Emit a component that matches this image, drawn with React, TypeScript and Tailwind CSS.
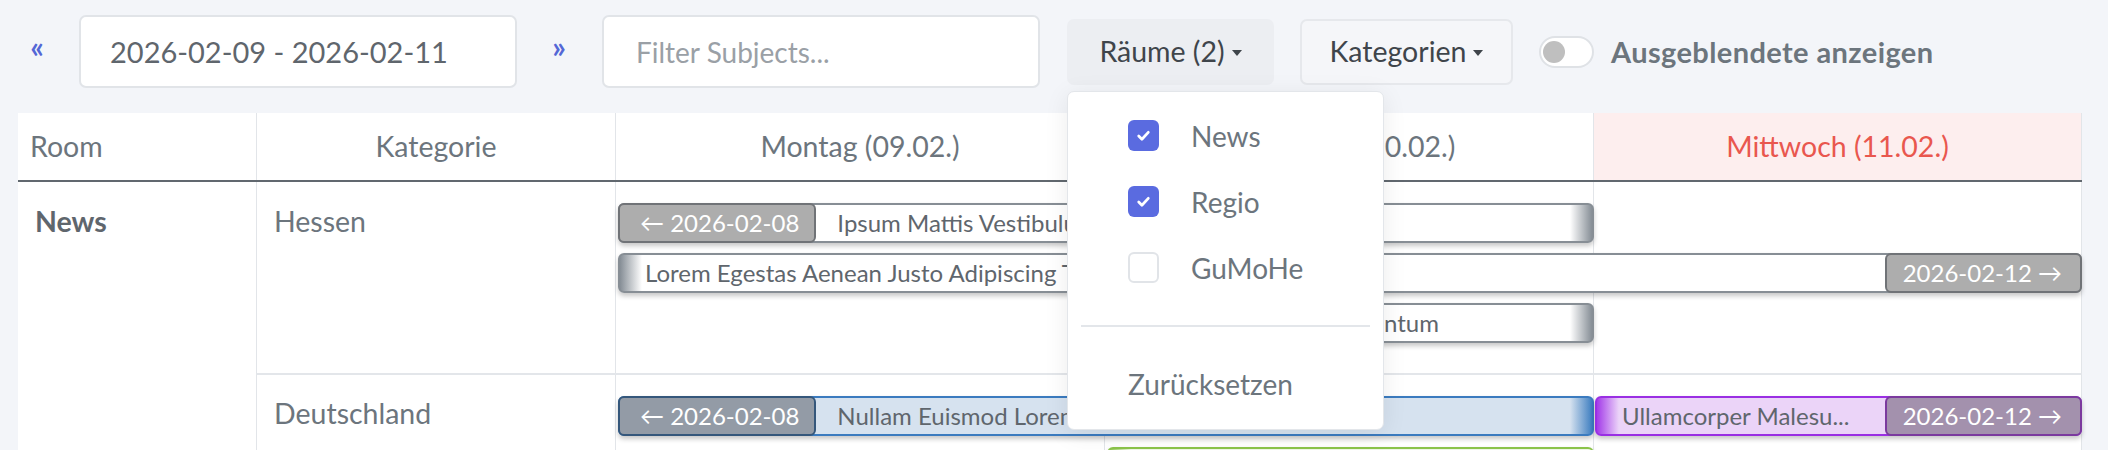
import React from "react";

function Caret() {
  return (
    <svg width="10" height="6" viewBox="0 0 10 6" className="ml-[7px] mt-[3px]">
      <path d="M0 0h10L5 6z" fill="currentColor" />
    </svg>
  );
}

function Check() {
  return (
    <svg viewBox="0 0 16 16" className="w-[17px] h-[17px]">
      <path d="M3.5 8.5l3 3 6-6.5" stroke="white" strokeWidth="2.6" fill="none" strokeLinecap="round" strokeLinejoin="round" />
    </svg>
  );
}

function DayLines() {
  return (
    <>
      <div className="col-start-1 row-span-full border-r border-[#e2e5e9]" />
      <div className="col-start-2 row-span-full border-r border-[#e2e5e9]" />
      <div className="col-start-3 row-span-full border-r border-[#e2e5e9]" />
    </>
  );
}

export default function App() {
  return (
    <div className="min-h-screen bg-[#f3f5f9] font-['Lato','Noto_Sans',sans-serif] text-[#6c757d]">
      {/* Toolbar */}
      <div className="h-[113px] pt-[15px] pl-[29px]">
        <div className="flex h-[73px] items-center">
          <span className="w-[16px] text-center text-[30px] font-bold leading-none text-[#5367d6] mb-[12px]">«</span>
          <div className="ml-[34px] flex h-[73px] w-[438px] items-center rounded-[7px] border-2 border-[#e1e4e8] bg-white pl-[29px] text-[29px] text-[#5f666d]">
            2026-02-09 - 2026-02-11
          </div>
          <span className="ml-[34px] w-[16px] text-center text-[30px] font-bold leading-none text-[#5367d6] mb-[12px]">»</span>
          <div className="ml-[35px] flex h-[73px] w-[438px] items-center rounded-[7px] border-2 border-[#e1e4e8] bg-white pl-[32px] text-[28px] text-[#9aa0a6]">
            Filter Subjects...
          </div>
          <div className="relative ml-[27px]">
            <div className="flex h-[66px] w-[207px] items-center justify-center rounded-[7px] bg-[#eceef2] text-[28.5px] text-[#3f454b]">
              Räume (2)
              <Caret />
            </div>
            <div className="absolute left-0 top-[72px] z-10 w-[317px] rounded-[7px] border border-[#e3e6ea] bg-white pt-[11px] pb-[12px] shadow-[0_4px_24px_rgba(0,0,0,0.08)]">
              {[
                { label: "News", on: true },
                { label: "Regio", on: true },
                { label: "GuMoHe", on: false },
              ].map((it) => (
                <div key={it.label} className="flex h-[66px] items-center pl-[60px] text-[28px] text-[#6c757d]">
                  {it.on ? (
                    <span className="flex h-[31px] w-[31px] items-center justify-center rounded-[6px] bg-[#5a6be0]">
                      <Check />
                    </span>
                  ) : (
                    <span className="h-[31px] w-[31px] rounded-[6px] border-2 border-[#e1e4e8] bg-white" />
                  )}
                  <span className="ml-[32px]">{it.label}</span>
                </div>
              ))}
              <div className="mx-[13px] my-[24px] h-[2px] bg-[#e3e6ea]" />
              <div className="flex h-[66px] items-center pl-[60px] text-[28px] text-[#6c757d]">Zurücksetzen</div>
            </div>
          </div>
          <div className="ml-[26px] flex h-[66px] w-[213px] items-center justify-center rounded-[7px] border-2 border-[#e6e8ec] bg-[#f5f6f9] text-[28.5px] text-[#3f454b]">
            Kategorien
            <Caret />
          </div>
          <div className="ml-[26px] flex h-[32px] w-[55px] items-center rounded-full border-2 border-[#dfe2e6] bg-white px-[2px]">
            <span className="h-[22px] w-[22px] rounded-full bg-[#bfbfbf]" />
          </div>
          <span className="ml-[17px] text-[29px] tracking-[0.4px] font-bold text-[#6c757d]">Ausgeblendete anzeigen</span>
        </div>
      </div>

      {/* Table */}
      <div className="ml-[18px] w-[2064px] bg-white">
        {/* Header */}
        <div className="flex h-[69px] border-b-2 border-[#61686f] text-[28.5px]">
          <div className="flex w-[239px] items-center border-r border-[#e2e5e9] pl-[12px]">Room</div>
          <div className="flex w-[359px] items-center justify-center border-r border-[#e2e5e9]">Kategorie</div>
          <div className="flex w-[489px] items-center justify-center border-r border-[#e2e5e9]">Montag (09.02.)</div>
          <div className="flex w-[489px] items-center justify-center border-r border-[#e2e5e9]">Dienstag (10.02.)</div>
          <div className="flex w-[488px] items-center justify-center border-r border-[#e2e5e9] bg-[#fdeeee] text-[#e9574e]">Mittwoch (11.02.)</div>
        </div>

        {/* Body */}
        <div className="flex text-[28.5px]">
          <div className="w-[239px] border-r border-[#e2e5e9] pl-[17px] pt-[18px] leading-[42px] font-bold text-[#5f666d]">News</div>
          <div className="flex flex-col">
            {/* Hessen */}
            <div className="flex border-b-2 border-[#e3e6ea]">
              <div className="w-[359px] border-r border-[#e2e5e9] pl-[17px] pt-[18px] leading-[42px]">Hessen</div>
              <div className="grid grid-cols-[489px_489px_488px] grid-rows-[21px_40px_10px_40px_10px_40px_30px] text-[24px] text-[#5f666d]">
                <DayLines />
                <div className="col-start-1 col-end-3 row-start-2 ml-[2px] flex items-center rounded-[6px] border-2 border-[#878e95] bg-[linear-gradient(to_right,#ffffff_calc(100%_-_22px),#868e96)] shadow-[0_3px_5px_rgba(0,0,0,0.22)] whitespace-nowrap">
                  <span className="-my-[2px] -ml-[2px] flex items-center self-stretch rounded-[6px] border-2 border-[#707377] bg-[#adadad] pl-[20px] pr-[15px] text-white">← 2026-02-08</span>
                  <span className="ml-[21px]">Ipsum Mattis Vestibulum Sem</span>
                </div>
                <div className="col-start-1 col-end-4 row-start-4 ml-[2px] flex items-center rounded-[6px] border-2 border-[#878e95] bg-[linear-gradient(to_right,#868e96,#ffffff_22px)] shadow-[0_3px_5px_rgba(0,0,0,0.22)] whitespace-nowrap">
                  <span className="ml-[25px] min-w-0 flex-1 truncate">Lorem Egestas Aenean Justo Adipiscing Tellus</span>
                  <span className="-my-[2px] -mr-[2px] flex items-center self-stretch rounded-[6px] border-2 border-[#707377] bg-[#adadad] pl-[16px] pr-[18px] text-white">2026-02-12 →</span>
                </div>
                <div className="col-start-2 row-start-6 ml-[2px] flex items-center rounded-[6px] border-2 border-[#878e95] bg-[linear-gradient(to_right,#ffffff_calc(100%_-_22px),#868e96)] shadow-[0_3px_5px_rgba(0,0,0,0.22)] whitespace-nowrap">
                  <span className="ml-[15px]">Vestibulum Ipsum Fermentum</span>
                </div>
              </div>
            </div>
            {/* Deutschland */}
            <div className="flex">
              <div className="w-[359px] border-r border-[#e2e5e9] pl-[17px] pt-[17px] leading-[42px]">Deutschland</div>
              <div className="grid grid-cols-[489px_489px_488px] grid-rows-[21px_40px_11px_40px_30px] text-[24px] text-[#5f666d]">
                <DayLines />
                <div className="col-start-1 col-end-3 row-start-2 ml-[2px] flex items-center rounded-[6px] border-2 border-[#3b7bbf] bg-[linear-gradient(to_right,#d6e2ef_calc(100%_-_22px),#3f7fc1)] shadow-[0_3px_5px_rgba(0,0,0,0.22)] whitespace-nowrap">
                  <span className="-my-[2px] -ml-[2px] flex items-center self-stretch rounded-[6px] border-2 border-[#35577b] bg-[#939ba6] pl-[20px] pr-[15px] text-white">← 2026-02-08</span>
                  <span className="ml-[21px]">Nullam Euismod Lorem Ridiculus</span>
                </div>
                <div className="col-start-3 row-start-2 ml-[1px] flex items-center rounded-[6px] border-2 border-[#9a2fe3] bg-[linear-gradient(to_right,#a43ce9,#ebd4f8_22px)] shadow-[0_3px_5px_rgba(0,0,0,0.22)] whitespace-nowrap">
                  <span className="ml-[25px] min-w-0 flex-1 truncate">Ullamcorper Malesu...</span>
                  <span className="-my-[2px] -mr-[2px] flex items-center self-stretch rounded-[6px] border-2 border-[#7b3a9e] bg-[#a391ad] pl-[16px] pr-[18px] text-white">2026-02-12 →</span>
                </div>
                <div className="col-start-2 row-start-4 ml-[2px] flex items-center rounded-[6px] border-2 border-[#8bc34a] bg-[linear-gradient(to_right,#8bc34a,#eef6e5_22px)] shadow-[0_3px_5px_rgba(0,0,0,0.22)] whitespace-nowrap">
                  <span className="ml-[25px]">Magna Tortor Sollicitudin</span>
                </div>
              </div>
            </div>
          </div>
        </div>
      </div>
    </div>
  );
}
